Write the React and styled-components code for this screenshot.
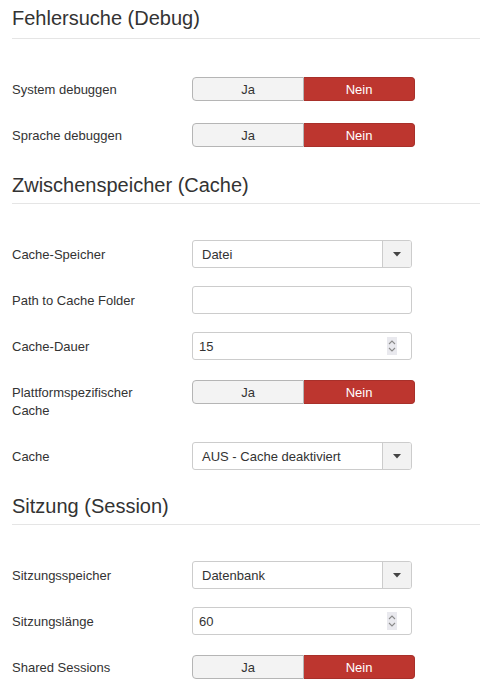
import React from 'react';
import styled, { createGlobalStyle } from 'styled-components';

const GlobalStyle = createGlobalStyle`
  body {
    margin: 0;
    background: #fff;
    font-family: "Liberation Sans", Arial, sans-serif;
    font-size: 13px;
    color: #333;
  }
`;

export default function App() {
  return (
    <Page>
      <GlobalStyle />
      <Section>
        <Legend $first>Fehlersuche (Debug)</Legend>
        <Row>
          <Label>System debuggen</Label>
          <Controls><YesNo /></Controls>
        </Row>
        <Row>
          <Label>Sprache debuggen</Label>
          <Controls><YesNo /></Controls>
        </Row>
      </Section>

      <Section>
        <Legend>Zwischenspeicher (Cache)</Legend>
        <Row>
          <Label>Cache-Speicher</Label>
          <Controls><Dropdown value="Datei" /></Controls>
        </Row>
        <Row>
          <Label>Path to Cache Folder</Label>
          <Controls><TextInput type="text" defaultValue="" /></Controls>
        </Row>
        <Row>
          <Label>Cache-Dauer</Label>
          <Controls><NumberInput value="15" /></Controls>
        </Row>
        <Row>
          <Label>Plattformspezifischer Cache</Label>
          <Controls><YesNo /></Controls>
        </Row>
        <Row>
          <Label>Cache</Label>
          <Controls><Dropdown value="AUS - Cache deaktiviert" /></Controls>
        </Row>
      </Section>

      <Section>
        <Legend>Sitzung (Session)</Legend>
        <Row>
          <Label>Sitzungsspeicher</Label>
          <Controls><Dropdown value="Datenbank" /></Controls>
        </Row>
        <Row>
          <Label>Sitzungslänge</Label>
          <Controls><NumberInput value="60" /></Controls>
        </Row>
        <Row>
          <Label>Shared Sessions</Label>
          <Controls><YesNo /></Controls>
        </Row>
      </Section>
    </Page>
  );
}

function YesNo() {
  return (
    <Toggle>
      <ToggleButton>Ja</ToggleButton>
      <ToggleButton $active>Nein</ToggleButton>
    </Toggle>
  );
}

function Dropdown({ value }) {
  return (
    <Select>
      <SelectValue>{value}</SelectValue>
      <SelectArrow>
        <svg width="8" height="5" viewBox="0 0 8 5">
          <path d="M0 0 H8 L4 4.5 Z" fill="#444" />
        </svg>
      </SelectArrow>
    </Select>
  );
}

function NumberInput({ value }) {
  return (
    <NumberBox>
      <NumberValue type="text" readOnly value={value} />
      <Spinner>
        <svg width="10" height="18" viewBox="0 0 10 18">
          <path d="M2 7 L5 4 L8 7" fill="none" stroke="#8a8a8a" strokeWidth="1.1" />
          <path d="M2 11 L5 14 L8 11" fill="none" stroke="#8a8a8a" strokeWidth="1.1" />
        </svg>
      </Spinner>
    </NumberBox>
  );
}

const Page = styled.div`
  padding-left: 12px;
`;

const Section = styled.fieldset`
  border: 0;
  margin: 0;
  padding: 0;
  min-width: 0;
`;

const Legend = styled.div`
  font-size: 20px;
  line-height: 36px;
  height: 36px;
  padding-bottom: ${p => (p.$first ? '2px' : '0')};
  border-bottom: 1px solid #e5e5e5;
  margin-bottom: 36px;
  color: #333;
`;

const Row = styled.div`
  display: flex;
  align-items: flex-start;
  margin-bottom: 18px;
`;

const Label = styled.label`
  width: 160px;
  margin-right: 20px;
  padding: 6px 0 4px;
  line-height: 18px;
  font-size: 13px;
  color: #333;
`;

const Controls = styled.div`
  display: flex;
  align-items: center;
  min-height: 28px;
`;

const Toggle = styled.div`
  display: flex;
  width: 223px;
  height: 24px;
`;

const ToggleButton = styled.div`
  flex: 1;
  display: flex;
  align-items: center;
  justify-content: center;
  font-size: 13px;
  color: ${p => (p.$active ? '#fff' : '#333')};
  background: ${p => (p.$active ? '#bd362f' : '#f3f3f3')};
  border: 1px solid ${p => (p.$active ? '#a8302a' : '#b5b5b5')};
  border-radius: ${p => (p.$active ? '0 4px 4px 0' : '4px 0 0 4px')};
  border-left-width: ${p => (p.$active ? '0' : '1px')};
`;

const Select = styled.div`
  display: flex;
  width: 220px;
  height: 28px;
  box-sizing: border-box;
  border: 1px solid #ccc;
  border-radius: 3px;
  background: #fff;
  overflow: hidden;
`;

const SelectValue = styled.div`
  flex: 1;
  display: flex;
  align-items: center;
  padding-left: 9px;
  font-size: 13px;
  color: #333;
`;

const SelectArrow = styled.div`
  width: 28px;
  display: flex;
  align-items: center;
  justify-content: center;
  background: #f2f2f2;
  border-left: 1px solid #ccc;
`;

const TextInput = styled.input`
  width: 220px;
  height: 28px;
  box-sizing: border-box;
  margin: 0;
  border: 1px solid #ccc;
  border-radius: 3px;
  padding: 4px 6px;
  font-family: inherit;
  font-size: 13px;
  color: #555;
  outline: none;
`;

const NumberBox = styled.div`
  display: flex;
  align-items: center;
  width: 220px;
  height: 28px;
  box-sizing: border-box;
  border: 1px solid #ccc;
  border-radius: 3px;
  background: #fff;
`;

const NumberValue = styled.input`
  flex: 1;
  min-width: 0;
  border: 0;
  margin: 0;
  padding: 0 6px;
  background: transparent;
  font-family: inherit;
  font-size: 13px;
  color: #333;
  outline: none;
`;

const Spinner = styled.div`
  display: flex;
  width: 10px;
  height: 18px;
  margin-right: 14px;
  background: #e9e9ee;
`;
